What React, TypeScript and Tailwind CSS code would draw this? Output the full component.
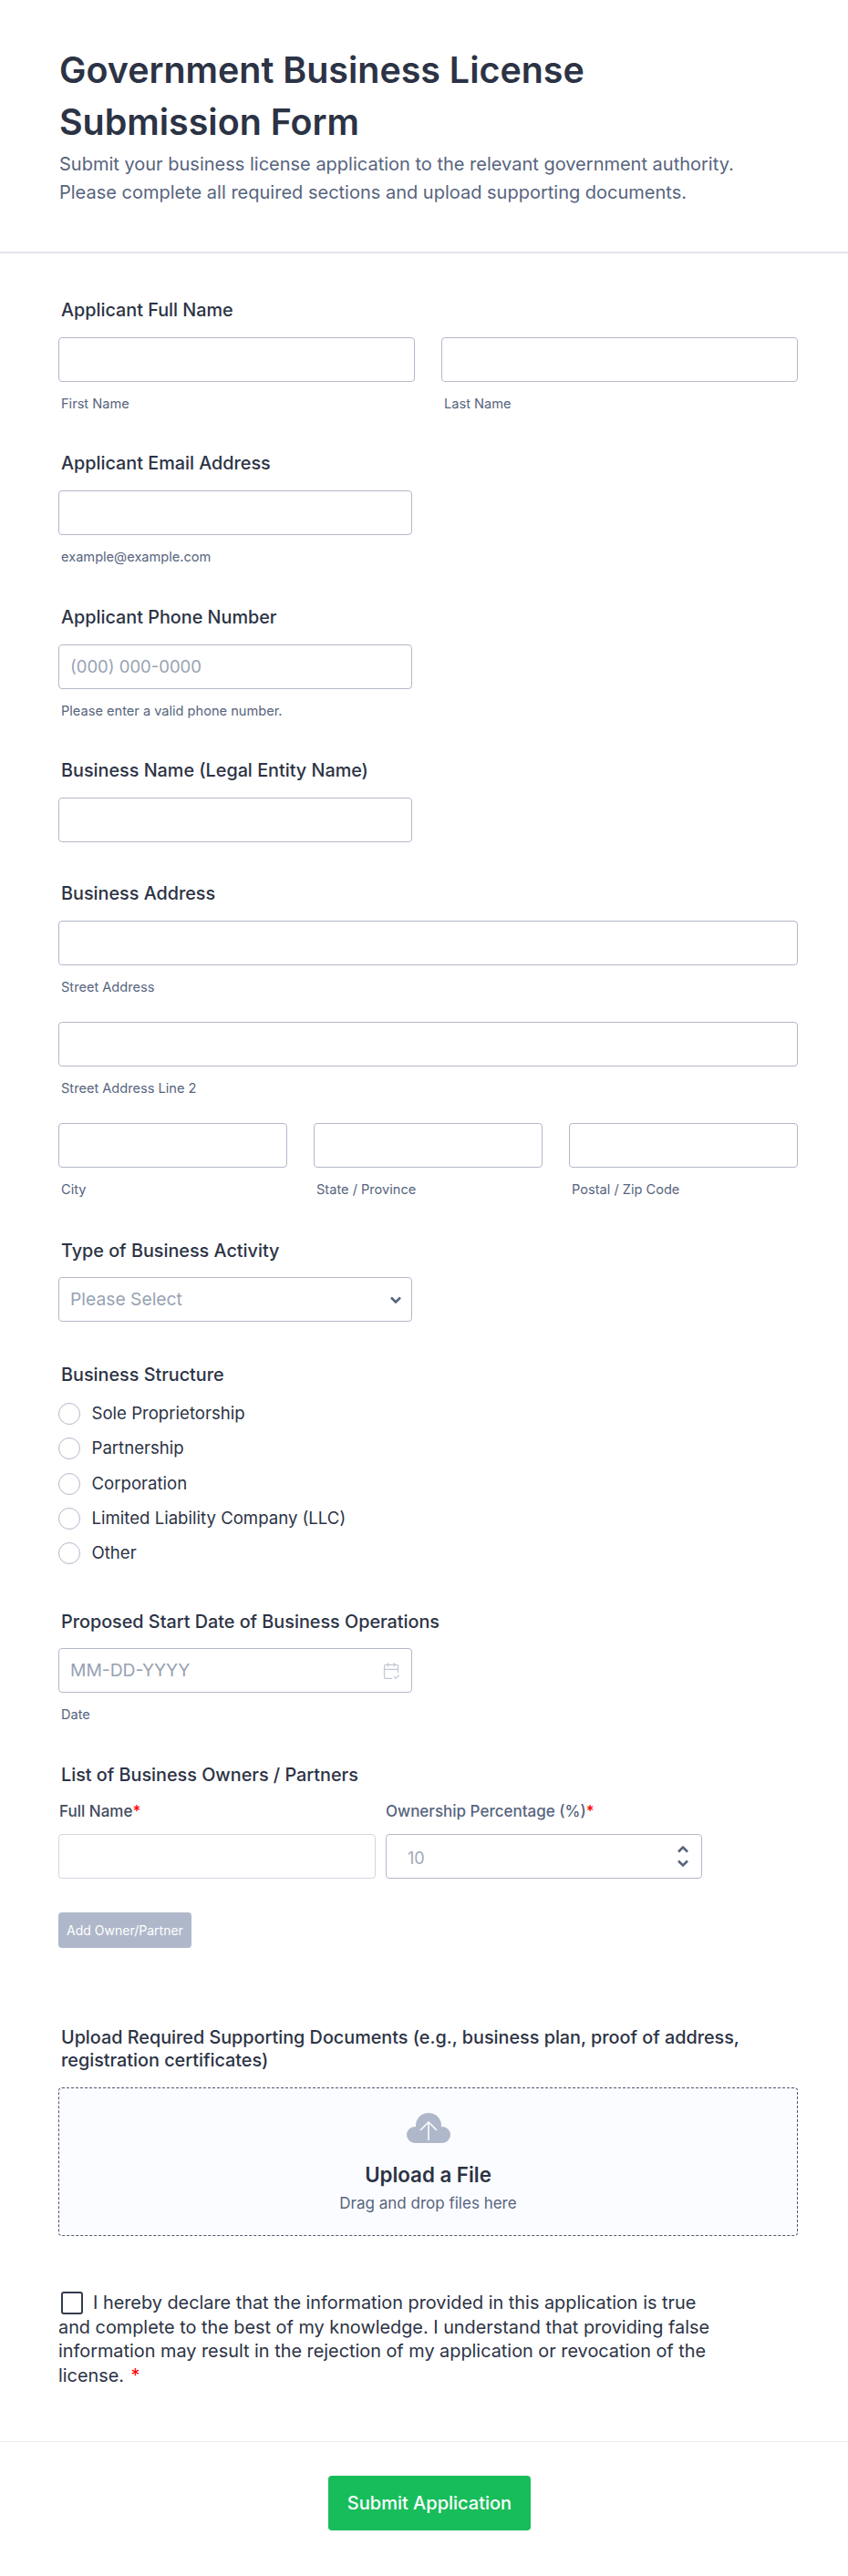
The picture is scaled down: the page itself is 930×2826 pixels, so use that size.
import React from "react";
import { CalendarCheck2 } from "lucide-react";

const inputClass =
  "flex h-[49px] w-full items-center rounded border border-[#b3b8ca] bg-white px-[12px] text-[#97a2b3]";

const Label = ({ children, className = "" }: { children: React.ReactNode; className?: string }) => (
  <div className={`ml-[3px] text-[19.800px] leading-[24px] font-medium text-[#2c3345] ${className}`}>{children}</div>
);

const Sub = ({ children }: { children: React.ReactNode }) => (
  <div className="ml-[3px] mt-[16px] text-[14.600px] leading-[16px] text-[#57647e]">{children}</div>
);

const Box = ({ children, className = "" }: { children?: React.ReactNode; className?: string }) => (
  <div className={`${inputClass} ${className}`}>{children}</div>
);

// small chevron used by the select and the number spinner
const Chevron = ({ up = false }: { up?: boolean }) => (
  <svg width="12" height="8" viewBox="0 0 12 8" aria-hidden="true">
    <path
      d={up ? "M1 6.500 6 1.500l5 5" : "M1 1.500l5 5 5-5"}
      fill="none"
      stroke="#57647e"
      strokeWidth="2.500"
    />
  </svg>
);

const radios = ["Sole Proprietorship", "Partnership", "Corporation", "Limited Liability Company (LLC)", "Other"];

const App = () => {
  return (
    <div className="min-h-[2826px] w-[930px] bg-white font-['Inter',sans-serif] text-[#2c3345]">
      {/* header */}
      <div className="h-[278px] border-b-2 border-[#e3e5ec] px-[65px] pt-[49px]">
        <h1 className="w-[700px] text-[39.400px] leading-[57px] font-semibold text-[#2c3345]">
          Government Business License Submission Form
        </h1>
        <p className="mt-[2px] text-[20px] leading-[31px] text-[#57647e]">
          Submit your business license application to the relevant government authority.
          <br />
          Please complete all required sections and upload supporting documents.
        </p>
      </div>

      <div className="pl-[64px] pr-[55px] pt-[50px]">
        <Label>Applicant Full Name</Label>
        <div className="mt-[18px] flex gap-[29px]">
          <div className="flex-1">
            <Box />
            <Sub>First Name</Sub>
          </div>
          <div className="flex-1">
            <Box />
            <Sub>Last Name</Sub>
          </div>
        </div>

        <Label className="mt-[45px]">Applicant Email Address</Label>
        <div className="mt-[18px] w-[388px]">
          <Box />
          <Sub>example@example.com</Sub>
        </div>

        <Label className="mt-[46px]">Applicant Phone Number</Label>
        <div className="mt-[18px] w-[388px]">
          <Box className="text-[18.500px]">(000) 000-0000</Box>
          <Sub>Please enter a valid phone number.</Sub>
        </div>

        <Label className="mt-[45px]">Business Name (Legal Entity Name)</Label>
        <div className="mt-[18px] w-[388px]">
          <Box />
        </div>

        <Label className="mt-[44px]">Business Address</Label>
        <div className="mt-[18px]">
          <Box />
          <Sub>Street Address</Sub>
        </div>
        <div className="mt-[30px]">
          <Box />
          <Sub>Street Address Line 2</Sub>
        </div>
        <div className="mt-[30px] flex gap-[29px]">
          <div className="flex-1">
            <Box />
            <Sub>City</Sub>
          </div>
          <div className="flex-1">
            <Box />
            <Sub>State / Province</Sub>
          </div>
          <div className="flex-1">
            <Box />
            <Sub>Postal / Zip Code</Sub>
          </div>
        </div>

        <Label className="mt-[47px]">Type of Business Activity</Label>
        <div className="mt-[17px] w-[388px]">
          <Box className="justify-between pr-[11px] text-[19.300px]">
            Please Select
            <Chevron />
          </Box>
        </div>

        <Label className="mt-[46px]">Business Structure</Label>
        <div className="mt-[19px] flex flex-col gap-[14.250px]">
          {radios.map((r) => (
            <div key={r} className="flex h-[24px] items-center gap-[12.500px] text-[18.600px] text-[#2c3345]">
              <span className="h-[24px] w-[24px] rounded-full border border-[#b3b8ca]" />
              {r}
            </div>
          ))}
        </div>

        <Label className="mt-[51px]">Proposed Start Date of Business Operations</Label>
        <div className="mt-[17px] w-[388px]">
          <Box className="justify-between text-[19.300px]">
            MM-DD-YYYY
            <CalendarCheck2 size={20} strokeWidth={1.5} className="text-[#c3c7d4]" />
          </Box>
          <Sub>Date</Sub>
        </div>

        <Label className="mt-[46px]">List of Business Owners / Partners</Label>
        <div className="mt-[16px] flex gap-[11px]">
          <div className="w-[348px]">
            <div className="ml-[1px] text-[17px] leading-[24px] font-medium text-[#434b60]">
              Full Name<span className="text-[#f00]">*</span>
            </div>
            <Box className="mt-[13px] border-[#d3d6de]" />
          </div>
          <div className="w-[347px]">
            <div className="text-[17px] leading-[24px] font-medium text-[#57647e]">
              Ownership Percentage (%)<span className="text-[#f00]">*</span>
            </div>
            <Box className="mt-[13px] justify-between pl-[23px] pr-[14px] text-[18px] text-[#a0a8b8]">
              <span className="pt-[3px]">10</span>
              <div className="flex flex-col gap-[7px]">
                <Chevron up />
                <Chevron />
              </div>
            </Box>
          </div>
        </div>
        <div className="mt-[37px] flex h-[39px] w-[146px] items-center justify-center rounded bg-[#afb8ca] text-[14px] text-white">
          Add Owner/Partner
        </div>

        <Label className="mt-[86px] leading-[25px]">
          Upload Required Supporting Documents (e.g., business plan, proof of address, registration certificates)
        </Label>
        <div className="mt-[17px] flex h-[163px] flex-col items-center rounded border border-dashed border-[#4f586c] bg-[#fbfcff] pt-[27px]">
          <svg width="48" height="33" viewBox="0 0 48 33" aria-hidden="true">
            <g fill="#afb8ca">
              <circle cx="24" cy="14" r="14" />
              <circle cx="9" cy="24" r="9" />
              <circle cx="39" cy="24" r="9" />
              <rect x="9" y="16" width="30" height="17" />
            </g>
            <path d="M24 30V10M15 19l9-9 9 9" fill="none" stroke="#fff" strokeWidth="1.500" />
          </svg>
          <div className="mt-[21px] text-[22.300px] leading-[28px] font-semibold text-[#2c3345]">Upload a File</div>
          <div className="mt-[6px] text-[17px] leading-[22px] text-[#57647e]">Drag and drop files here</div>
        </div>

        <div className="mt-[60px] w-[725px] text-[19.850px] leading-[26.700px] text-[#2c3345]">
          <span className="mr-[11px] ml-[3px] inline-block h-[25px] w-[24px] rounded-[3px] border-2 border-[#343c4e] align-[-6px]" />
          I hereby declare that the information provided in this application is true and complete to the best of my
          knowledge. I understand that providing false information may result in the rejection of my application or
          revocation of the license. <span className="ml-[2px] inline-block leading-[20px] text-[#f00]">*</span>
        </div>
      </div>

      {/* footer */}
      <div className="mt-[58px] flex h-[147px] justify-center border-t border-[#e9ebf2] pl-[12px] pt-[37px]">
        <div className="flex h-[60px] w-[222px] items-center justify-center rounded bg-[#18bd5b] text-[20px] font-medium text-white">
          Submit Application
        </div>
      </div>
    </div>
  );
};

export default App;
